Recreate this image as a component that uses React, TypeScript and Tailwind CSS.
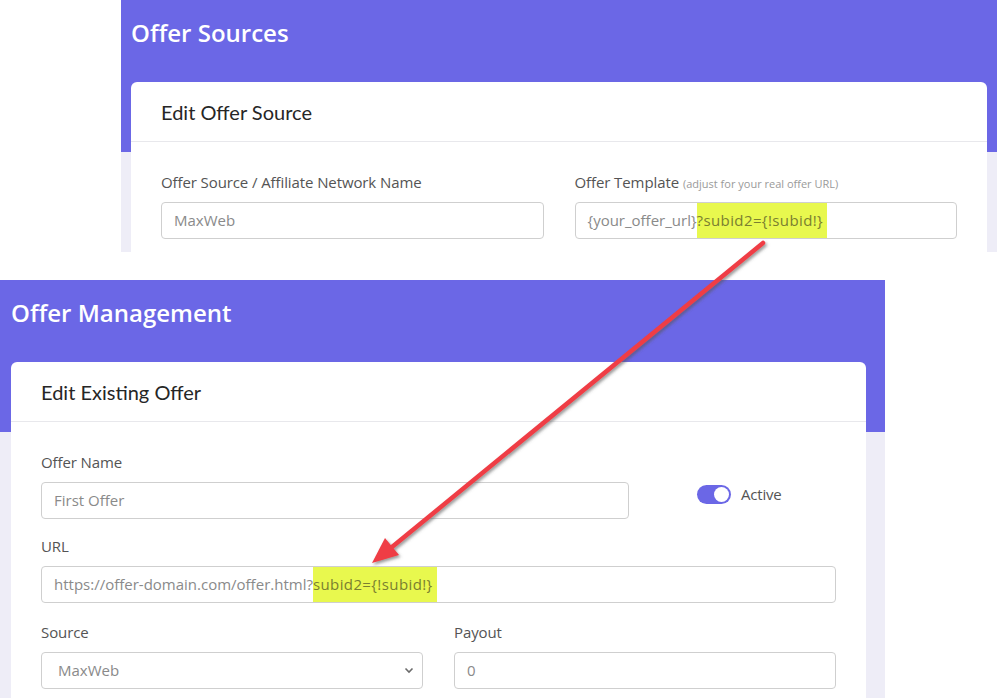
import React from "react";

const font = { fontFamily: "'Open Sans', Lato, sans-serif" };

function Field({ label, note, children, className = "" }: { label: string; note?: string; children: React.ReactNode; className?: string }) {
  return (
    <div className={className}>
      <div className="h-[20px] text-[15px] leading-[20px] text-[#545454] mb-[10px] whitespace-nowrap tracking-[-0.1px]">
        {label}
        {note && <span className="ml-[4px] text-[11px] tracking-normal text-[#9a9a9a]">{note}</span>}
      </div>
      {children}
    </div>
  );
}

function Input({ text, hl, w = "w-full" }: { text: string; hl?: string; w?: string }) {
  return (
    <div className={`${w} h-[37px] border border-[#cfcfcf] rounded-[4px] flex items-stretch pl-[12px] text-[15px] text-[#8a8a8a] bg-white`}>
      <span className="flex items-center whitespace-nowrap">{text}</span>
      {hl && <span className="flex items-center whitespace-nowrap bg-[#e8f84e] text-[#7a7f30] tracking-[0.4px] pr-[4px]">{hl}</span>}
    </div>
  );
}

function Card({ title, children }: { title: string; children: React.ReactNode }) {
  return (
    <div className="bg-white rounded-[6px] mt-[-70px] mx-[10px]">
      <div className="h-[60px] flex items-center px-[30px] text-[20px] text-[#262626] border-b border-[#e8e8ec]" style={{ fontFamily: "Lato, sans-serif" }}>{title}</div>
      <div className="px-[30px] pt-[30px] pb-[20px]">{children}</div>
    </div>
  );
}

export default function App() {
  return (
    <div className="relative w-[997px] h-[698px] bg-white overflow-hidden" style={font}>
      {/* top screenshot */}
      <div className="ml-[121px] w-[876px] h-[252px] bg-[#eeedf7] overflow-hidden">
        <div className="h-[152px] bg-[#6b67e6] px-[10px] pt-[16px]">
          <h1 className="text-[24px] leading-[34px] font-semibold text-white">Offer Sources</h1>
        </div>
        <Card title="Edit Offer Source">
          <div className="grid grid-cols-2 gap-x-[31px]">
            <Field label="Offer Source / Affiliate Network Name">
              <Input text="MaxWeb" />
            </Field>
            <Field label="Offer Template" note="(adjust for your real offer URL)">
              <Input text="{your_offer_url}" hl="?subid2={!subid!}" />
            </Field>
          </div>
        </Card>
      </div>

      {/* bottom screenshot */}
      <div className="mt-[28px] w-[885px] h-[418px] bg-[#eeedf7] overflow-hidden">
        <div className="h-[152px] bg-[#6b67e6] px-[11px] pt-[16px]">
          <h1 className="text-[24px] leading-[34px] font-semibold text-white">Offer Management</h1>
        </div>
        <div className="ml-[1px] mr-[9px]">
          <Card title="Edit Existing Offer">
            <div className="flex items-start">
              <Field label="Offer Name" className="w-[588px]">
                <Input text="First Offer" />
              </Field>
              <div className="ml-[68px] mt-[31px] flex items-center gap-[10px]">
                <div className="w-[34px] h-[19px] rounded-full bg-[#6b67e6] flex items-center justify-end pr-[2px]">
                  <div className="w-[15px] h-[15px] rounded-full bg-white" />
                </div>
                <span className="text-[15px] text-[#545454] tracking-[-0.2px]">Active</span>
              </div>
            </div>
            <Field label="URL" className="mt-[17px]">
              <Input text="https://offer-domain.com/offer.html?" hl="subid2={!subid!}" />
            </Field>
            <div className="grid grid-cols-2 gap-x-[31px] mt-[19px]">
              <Field label="Source">
                <div className="h-[37px] border border-[#cfcfcf] rounded-[4px] flex items-center justify-between pl-[16px] pr-[8px] text-[15px] text-[#8a8a8a]">
                  <span>MaxWeb</span>
                  <svg width="10" height="7" viewBox="0 0 10 7"><path d="M1.5 1.5 L5 5 L8.5 1.5" fill="none" stroke="#6b6b6b" strokeWidth="1.6" /></svg>
                </div>
              </Field>
              <Field label="Payout">
                <Input text="0" />
              </Field>
            </div>
          </Card>
        </div>
      </div>

      {/* arrow overlay */}
      <svg className="absolute inset-0 pointer-events-none" width="997" height="698" viewBox="0 0 997 698">
        <defs>
          <filter id="sh" x="-10%" y="-10%" width="120%" height="120%">
            <feDropShadow dx="1.5" dy="2" stdDeviation="1.5" floodColor="#555" floodOpacity="0.6" />
          </filter>
        </defs>
        <g filter="url(#sh)">
          <line x1="763" y1="243" x2="392" y2="547" stroke="#ef3d45" strokeWidth="4.5" strokeLinecap="round" />
          <polygon points="372,563 399,555 385,538" fill="#ef3d45" />
        </g>
      </svg>
    </div>
  );
}
